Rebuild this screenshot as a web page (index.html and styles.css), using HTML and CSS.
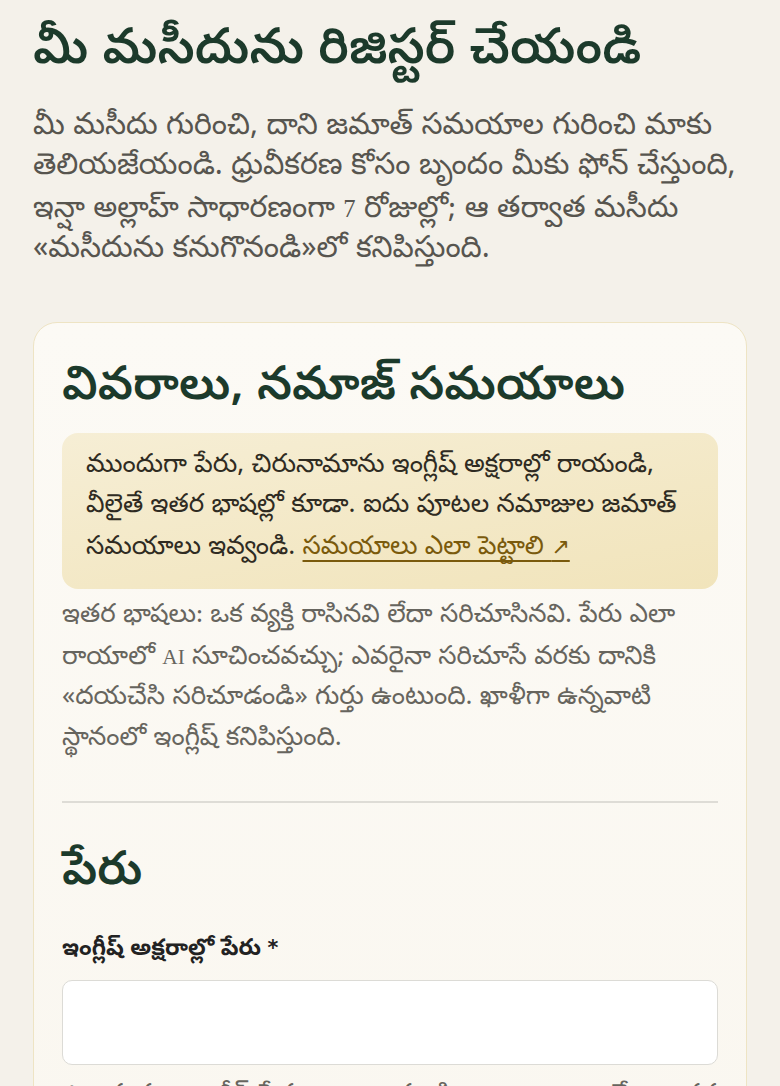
FILE: index.html
```html
<!DOCTYPE html>
<html lang="te">
<head>
<meta charset="utf-8">
<title>మీ మసీదును రిజిస్టర్ చేయండి</title>
<link rel="stylesheet" href="styles.css">
</head>
<body>
<main class="page">
  <h1 class="title">మీ మసీదును రిజిస్టర్ చేయండి</h1>
  <p class="lead">మీ మసీదు గురించి, దాని జమాత్ సమయాల గురించి మాకు తెలియజేయండి. ధ్రువీకరణ కోసం బృందం మీకు ఫోన్ చేస్తుంది, ఇన్షా అల్లాహ్ సాధారణంగా <span class="lat">7</span> రోజుల్లో; ఆ తర్వాత మసీదు «మసీదును కనుగొనండి»లో కనిపిస్తుంది.</p>

  <section class="card">
    <h2 class="card-title">వివరాలు, నమాజ్ సమయాలు</h2>
    <div class="note">ముందుగా పేరు, చిరునామాను ఇంగ్లీష్ అక్షరాల్లో రాయండి, వీలైతే ఇతర భాషల్లో కూడా. ఐదు పూటల నమాజుల జమాత్ సమయాలు ఇవ్వండి. <a class="note-link" href="#">సమయాలు ఎలా పెట్టాలి <span class="arrow">↗</span></a></div>
    <p class="help">ఇతర భాషలు: ఒక వ్యక్తి రాసినవి లేదా సరిచూసినవి. పేరు ఎలా రాయాలో <span class="lat">AI</span> సూచించవచ్చు; ఎవరైనా సరిచూసే వరకు దానికి «దయచేసి సరిచూడండి» గుర్తు ఉంటుంది. ఖాళీగా ఉన్నవాటి స్థానంలో ఇంగ్లీష్ కనిపిస్తుంది.</p>
    <hr class="divider">
    <h3 class="section-title">పేరు</h3>
    <label class="field-label" for="name-en">ఇంగ్లీష్ అక్షరాల్లో పేరు <span class="req">*</span></label>
    <input class="field-input" id="name-en" type="text">
    <p class="hint">ఉదాహరణ: ఇంగ్లీష్ పేరు ఇలా రాయండి: <span class="lat">Masjid an-Noor</span> లేదా ఇతర</p>
  </section>
</main>
</body>
</html>
```

FILE: styles.css
```css
html, body {
  margin: 0;
  padding: 0;
}
body {
  background: #f4f1ea;
  font-family: "Noto Sans Telugu", "Liberation Serif", serif;
  color: #2b2b2b;
}
.page {
  padding: 0 33px 40px;
}
.lat {
  font-family: "Liberation Serif", serif;
  font-size: 0.82em;
}
.title {
  margin: 0;
  padding-top: 22px;
  font-size: 50px;
  font-weight: 600;
  line-height: 64px;
  color: #1c3a2b;
}
.lead {
  margin: 22px 0 0;
  font-size: 30px;
  line-height: 40.3px;
  color: #57554f;
}
.card {
  margin-top: 51px;
  background: linear-gradient(#fcfaf5, #faf7f0);
  border: 1px solid #eee4c4;
  border-radius: 24px;
  padding: 35px 28px 40px;
}
.card-title {
  margin: 0;
  font-size: 47px;
  font-weight: 600;
  line-height: 64px;
  color: #1c3a2b;
}
.note {
  margin-top: 11px;
  background: linear-gradient(170deg, #f6eed5, #f1e4bb);
  border-radius: 16px;
  padding: 15px 24px 19px;
  font-size: 26px;
  line-height: 39.5px;
  color: #2f2b22;
}
.note-link {
  color: #7a5a0c;
  text-decoration: underline;
  text-decoration-thickness: 1.5px;
  text-decoration-skip-ink: none;
  text-underline-offset: 6px;
}
.arrow {
  font-family: "DejaVu Sans", sans-serif;
  font-size: 0.85em;
}
.help {
  margin: 8px 0 0;
  font-size: 26px;
  line-height: 40.3px;
  color: #67655e;
}
.divider {
  margin: 41px 0 0;
  border: 0;
  border-top: 2px solid #dedcd6;
}
.section-title {
  margin: 40px 0 0;
  font-size: 47px;
  font-weight: 600;
  line-height: 64px;
  color: #1c3a2b;
}
.field-label {
  display: block;
  margin-top: 24px;
  font-size: 23px;
  font-weight: 700;
  line-height: 34px;
  color: #222;
}
.req {
  font-family: "DejaVu Sans", sans-serif;
  font-weight: 700;
  font-size: 0.9em;
}
.field-input {
  display: block;
  box-sizing: border-box;
  width: 100%;
  height: 85px;
  margin-top: 12px;
  border: 1.5px solid #dcdbd6;
  border-radius: 10px;
  background: #fff;
  font: inherit;
  font-size: 24px;
  padding: 0 16px;
}
.hint {
  margin: 10px 0 0;
  font-size: 26px;
  line-height: 40px;
  color: #67655e;
}
```
